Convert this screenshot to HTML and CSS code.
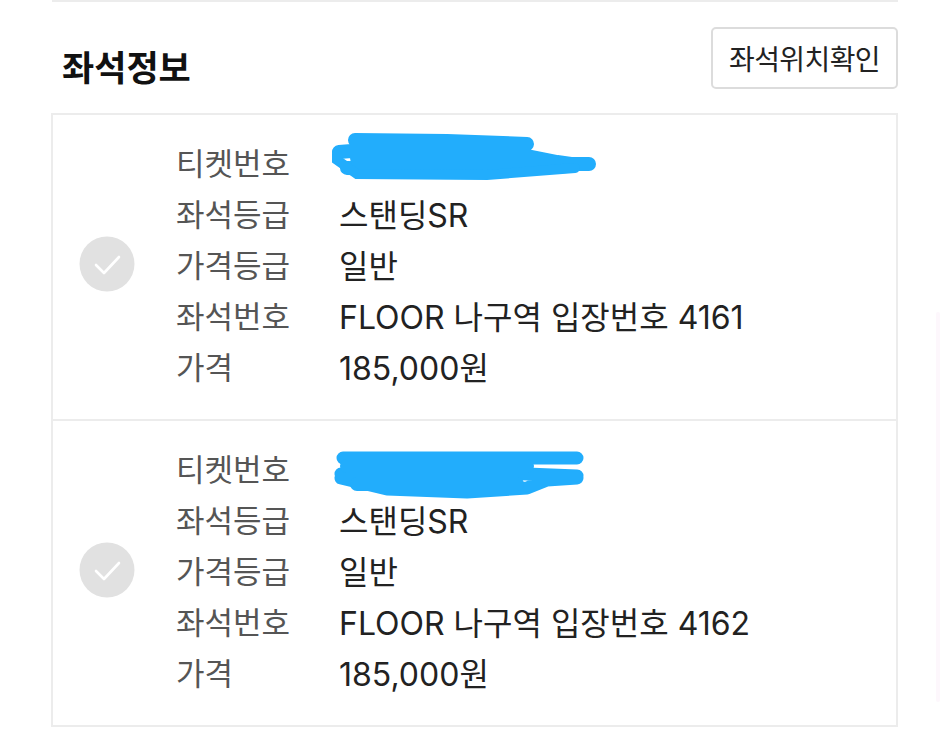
FILE: index.html
```html
<!DOCTYPE html>
<html lang="ko">
<head>
<meta charset="utf-8">
<link rel="stylesheet" href="styles.css">
</head>
<body>
<div class="page">
  <div class="topline"></div>
  <div class="header">
    <h2 class="title">좌석정보</h2>
    <button class="btn">좌석위치확인</button>
  </div>
  <div class="list">
    <div class="item">
      <div class="check"><svg viewBox="0 0 56 56" width="56" height="56"><circle cx="28" cy="28" r="27.5" fill="#e1e1e1"/><path d="M17 29 L25 37 L40 21" fill="none" stroke="#fff" stroke-width="2.6" stroke-linecap="round" stroke-linejoin="round"/></svg></div>
      <div class="rows">
        <div class="row"><span class="lbl">티켓번호</span><span class="val redact">
          <svg class="scribble s1" viewBox="0 0 270 60" width="270" height="60"><path d="M12 28 L50 25 L120 26 L190 30 L210 34 L230 38 L244 40 L262 40 M20 44 L150 47 L240 42 M28 16 L120 17 L200 20 M30 34 L200 36" fill="none" stroke="#22adfc" stroke-width="14" stroke-linecap="round" stroke-linejoin="round"/><path d="M10 30 L10 36 L30 50 L160 51 L248 44" fill="none" stroke="#22adfc" stroke-width="10" stroke-linecap="round"/></svg>
        </span></div>
        <div class="row"><span class="lbl">좌석등급</span><span class="val">스탠딩SR</span></div>
        <div class="row"><span class="lbl">가격등급</span><span class="val">일반</span></div>
        <div class="row"><span class="lbl">좌석번호</span><span class="val">FLOOR 나구역 입장번호 4161</span></div>
        <div class="row"><span class="lbl">가격</span><span class="val">185,000원</span></div>
      </div>
    </div>
    <div class="item">
      <div class="check"><svg viewBox="0 0 56 56" width="56" height="56"><circle cx="28" cy="28" r="27.5" fill="#e1e1e1"/><path d="M17 29 L25 37 L40 21" fill="none" stroke="#fff" stroke-width="2.6" stroke-linecap="round" stroke-linejoin="round"/></svg></div>
      <div class="rows">
        <div class="row"><span class="lbl">티켓번호</span><span class="val redact">
          <svg class="scribble s2" viewBox="0 0 270 60" width="270" height="60"><path d="M16 14 L250 14 M14 30 L120 27 L250 32 M14 34 L60 45 L140 48 L200 44 L220 36 L250 34" fill="none" stroke="#22adfc" stroke-width="13" stroke-linecap="round" stroke-linejoin="round"/><path d="M20 22 L200 22 M30 40 L190 40" fill="none" stroke="#22adfc" stroke-width="14" stroke-linecap="round"/></svg>
        </span></div>
        <div class="row"><span class="lbl">좌석등급</span><span class="val">스탠딩SR</span></div>
        <div class="row"><span class="lbl">가격등급</span><span class="val">일반</span></div>
        <div class="row"><span class="lbl">좌석번호</span><span class="val">FLOOR 나구역 입장번호 4162</span></div>
        <div class="row"><span class="lbl">가격</span><span class="val">185,000원</span></div>
      </div>
    </div>
  </div>
  <div class="scrollbar"></div>
</div>
</body>
</html>
```

FILE: styles.css
```css
html, body {
  margin: 0;
  padding: 0;
  background: #fff;
}
body {
  font-family: Inter, "Noto Sans CJK KR", sans-serif;
  color: #222;
}
.page {
  position: relative;
  width: 847px;
  margin-left: 51px;
  height: 750px;
}
.topline {
  height: 2px;
  background: #ececec;
  margin-left: 1px;
}
.header {
  display: flex;
  justify-content: space-between;
  align-items: flex-start;
  height: 111px;
}
.title {
  margin: 43px 0 0 11px;
  font-family: "Noto Sans CJK KR", sans-serif;
  font-size: 35px;
  font-weight: 700;
  line-height: 1.2;
  letter-spacing: 0;
  color: #111;
}
.btn {
  margin-top: 25px;
  width: 187px;
  height: 62px;
  border: 2px solid #dcdcdc;
  border-radius: 5px;
  background: #fff;
  font-family: "Noto Sans CJK KR", sans-serif;
  font-size: 28px;
  color: #222;
  padding: 0;
  letter-spacing: -0.6px;
}
.list {
  border: 2px solid #ececec;
}
.item {
  display: flex;
  align-items: center;
  padding: 21px 0 28px 26px;
}
.item + .item {
  border-top: 2px solid #ececec;
}
.check {
  width: 56px;
  height: 56px;
  margin-right: 41px;
  flex: none;
}
.check svg { display: block; }
.rows {
  display: flex;
  flex-direction: column;
}
.row {
  display: flex;
  height: 51px;
  align-items: center;
  font-size: 32px;
}
.lbl {
  width: 165px;
  color: #555;
  font-family: "Noto Sans CJK KR", sans-serif;
  font-size: 31px;
}
.val {
  color: #222;
  font-weight: 400;
  margin-left: -2px;
}
.redact {
  position: relative;
  width: 270px;
  height: 51px;
}
.scribble {
  position: absolute;
  display: block;
}
.s1 { left: -12px; top: -12px; }
.s2 { left: -12px; top: 2px; }
.scrollbar {
  position: absolute;
  right: -42px;
  top: 312px;
  width: 4px;
  height: 390px;
  background: #fdf7fc;
  border-radius: 2px;
}
```
